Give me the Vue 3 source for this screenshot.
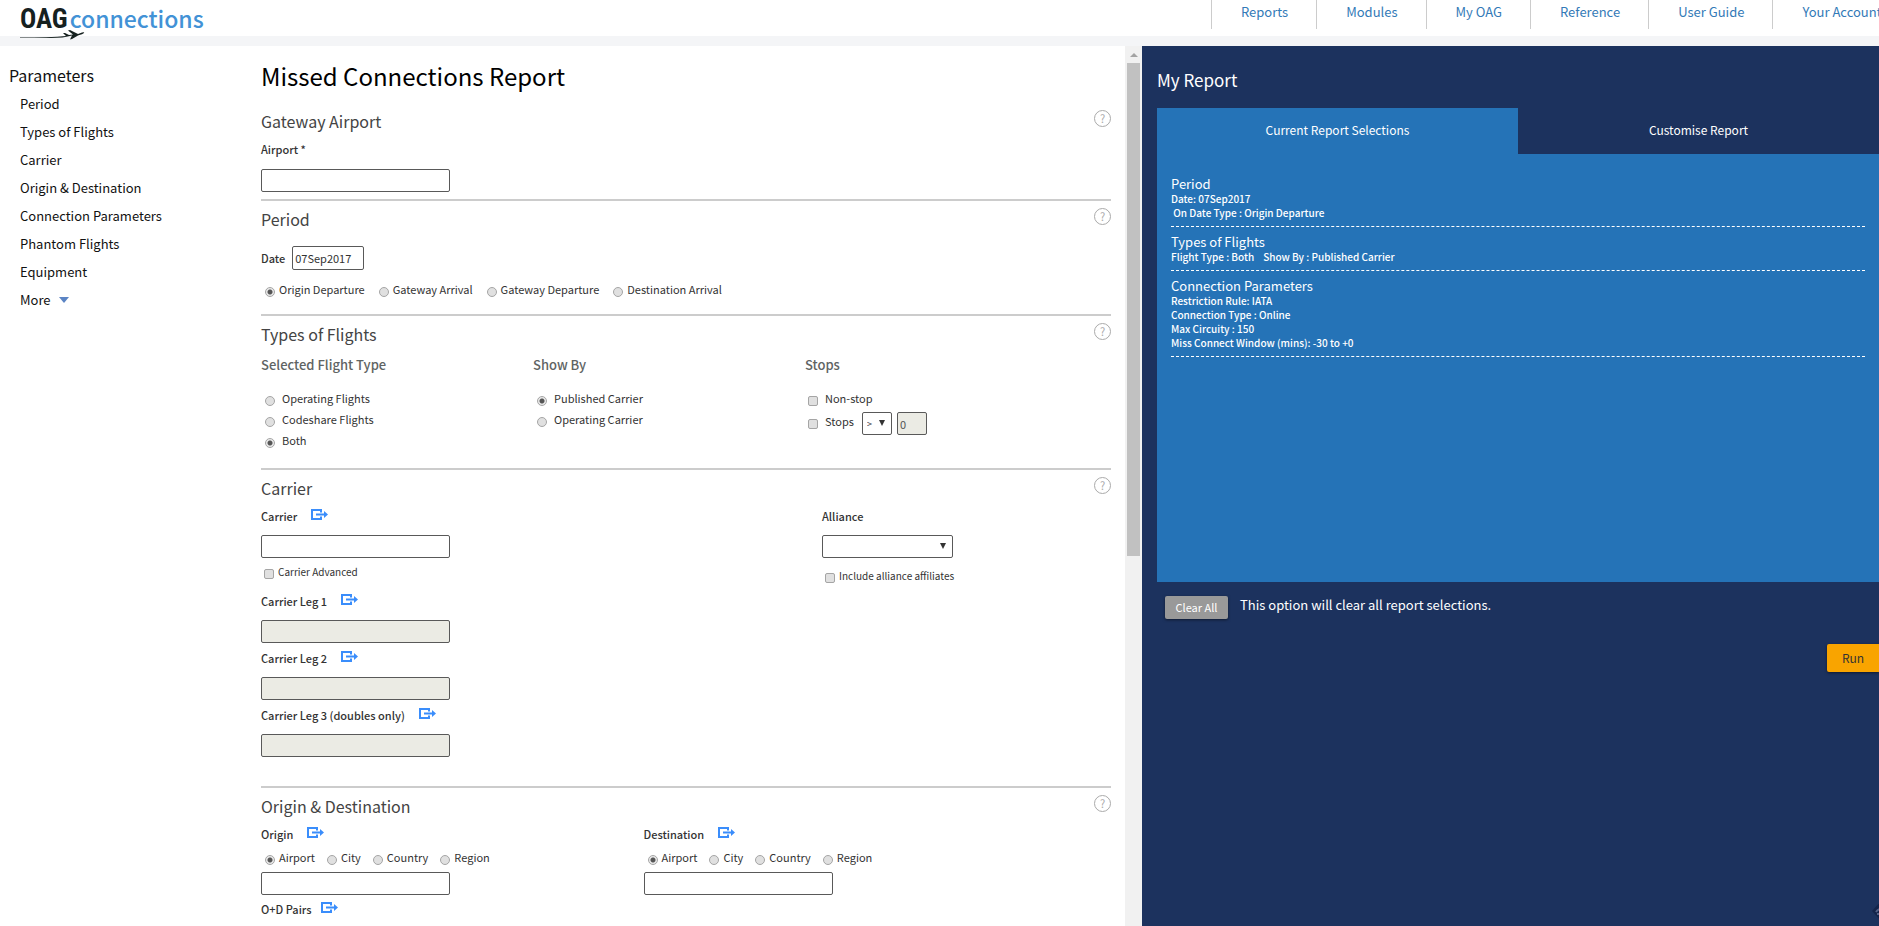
<script setup>
import { ref } from 'vue'

const nav = ['Reports', 'Modules', 'My OAG', 'Reference', 'User Guide', 'Your Account']
const params = [
  'Period',
  'Types of Flights',
  'Carrier',
  'Origin & Destination',
  'Connection Parameters',
  'Phantom Flights',
  'Equipment',
]
const dateTypes = ['Origin Departure', 'Gateway Arrival', 'Gateway Departure', 'Destination Arrival']
const flightTypes = ['Operating Flights', 'Codeshare Flights', 'Both']
const showByTypes = ['Published Carrier', 'Operating Carrier']
const legs = ['Carrier Leg 1', 'Carrier Leg 2', 'Carrier Leg 3 (doubles only)']
const places = ['Airport', 'City', 'Country', 'Region']
const ends = ['Origin', 'Destination']

const date = ref('07Sep2017')
const dateType = ref('Origin Departure')
const flightType = ref('Both')
const showBy = ref('Published Carrier')
const place = ref({ Origin: 'Airport', Destination: 'Airport' })

const summary = [
  { title: 'Period', lines: ['Date: 07Sep2017', '\u00a0On Date Type : Origin Departure'] },
  { title: 'Types of Flights', lines: ['Flight Type : Both\u00a0\u00a0\u00a0 Show By : Published Carrier'] },
  {
    title: 'Connection Parameters',
    lines: [
      'Restriction Rule: IATA',
      'Connection Type : Online',
      'Max Circuity : 150',
      'Miss Connect Window (mins): -30 to +0',
    ],
  },
]
</script>

<template>
  <div class="page">
    <svg width="0" height="0" class="defs" aria-hidden="true">
      <symbol id="lookup" viewBox="0 0 17 11">
        <path d="M1 1h9v9H1z" fill="none" stroke="#3a8dfb" stroke-width="2" />
        <path d="M8 3.500h4v4H8z" fill="#fff" />
        <path d="M5 4.500h8V2l4 3.500-4 3.500V6.500H5z" fill="#3a8dfb" />
      </symbol>
    </svg>

    <header class="top">
      <a href="#" class="logo" aria-label="OAG connections">
        <span class="oag">OAG</span>
        <span class="conn">connections</span>
        <svg class="plane" width="66" height="12" viewBox="0 0 66 12" aria-hidden="true">
          <path d="M0 8.500Q30 8.500 46 7L43 4h2l4 2 4-.5L48 1.500l2-.5 8 4 4-1.500q3-.5 2 .5-1 1-6 2.500L52 10l-2 .5 2-4Q44 9 30 9T0 9z" fill="#16211f" />
        </svg>
      </a>
      <nav class="nav">
        <a v-for="n in nav" :key="n" href="#">{{ n }}</a>
      </nav>
    </header>

    <main class="main">
      <div class="left">
        <aside class="side">
          <h2>Parameters</h2>
          <a v-for="p in params" :key="p" href="#">{{ p }}</a>
          <a href="#" class="more">More <i class="caret"></i></a>
        </aside>

        <form class="form" @submit.prevent>
          <h1>Missed Connections Report</h1>

          <section class="sec gateway">
            <div class="head"><h3>Gateway Airport</h3><button type="button" class="help">?</button></div>
            <div class="lab"><label for="airport">Airport *</label></div>
            <input id="airport" type="text" class="box" />
          </section>

          <section class="sec period">
            <div class="head"><h3>Period</h3><button type="button" class="help">?</button></div>
            <div class="date">
              <label for="date">Date</label>
              <input id="date" v-model="date" type="text" class="box" />
            </div>
            <div class="inline">
              <label v-for="d in dateTypes" :key="d" class="opt">
                <input v-model="dateType" type="radio" name="dateType" :value="d" /><span>{{ d }}</span>
              </label>
            </div>
          </section>

          <section class="sec types">
            <div class="head"><h3>Types of Flights</h3><button type="button" class="help">?</button></div>
            <div class="thirds">
              <div>
                <h4>Selected Flight Type</h4>
                <label v-for="f in flightTypes" :key="f" class="opt wide">
                  <input v-model="flightType" type="radio" name="flightType" :value="f" /><span>{{ f }}</span>
                </label>
              </div>
              <div>
                <h4>Show By</h4>
                <label v-for="s in showByTypes" :key="s" class="opt wide">
                  <input v-model="showBy" type="radio" name="showBy" :value="s" /><span>{{ s }}</span>
                </label>
              </div>
              <div>
                <h4>Stops</h4>
                <label class="opt wide"><input type="checkbox" /><span>Non-stop</span></label>
                <div class="stops">
                  <label class="opt wide"><input type="checkbox" /><span>Stops</span></label>
                  <span class="pick op">
                    <select aria-label="Stops comparison"><option>&gt;</option></select>
                  </span>
                  <input type="text" class="box" value="0" disabled aria-label="Number of stops" />
                </div>
              </div>
            </div>
          </section>

          <section class="sec carrier">
            <div class="head"><h3>Carrier</h3><button type="button" class="help">?</button></div>
            <div class="split">
              <div>
                <div class="lab">
                  <label for="carrier">Carrier</label>
                  <button type="button" class="look" aria-label="Look up"><svg width="17" height="11"><use href="#lookup" /></svg></button>
                </div>
                <input id="carrier" type="text" class="box" />
                <label class="opt small adv"><input type="checkbox" /><span>Carrier Advanced</span></label>
                <div v-for="(l, i) in legs" :key="l" class="leg">
                  <div class="lab">
                    <label :for="'leg' + i">{{ l }}</label>
                    <button type="button" class="look" aria-label="Look up"><svg width="17" height="11"><use href="#lookup" /></svg></button>
                  </div>
                  <input :id="'leg' + i" type="text" class="box" disabled />
                </div>
              </div>
              <div>
                <div class="lab"><label for="alliance">Alliance</label></div>
                <span class="pick alliance"><select id="alliance"><option></option></select></span>
                <label class="opt small incl"><input type="checkbox" /><span>Include alliance affiliates</span></label>
              </div>
            </div>
          </section>

          <section class="sec od">
            <div class="head"><h3>Origin &amp; Destination</h3><button type="button" class="help">?</button></div>
            <div class="halves">
              <div v-for="e in ends" :key="e">
                <div class="lab">
                  <label :for="e">{{ e }}</label>
                  <button type="button" class="look" aria-label="Look up"><svg width="17" height="11"><use href="#lookup" /></svg></button>
                </div>
                <div class="inline">
                  <label v-for="p in places" :key="p" class="opt">
                    <input v-model="place[e]" type="radio" :name="e + 'Place'" :value="p" /><span>{{ p }}</span>
                  </label>
                </div>
                <input :id="e" type="text" class="box" />
              </div>
            </div>
            <div class="lab pairs">
              <span>O+D Pairs</span>
              <button type="button" class="look" aria-label="Look up"><svg width="17" height="11"><use href="#lookup" /></svg></button>
            </div>
          </section>
        </form>

        <div class="bar" aria-hidden="true"><i class="up"></i><i class="thumb"></i></div>
      </div>

      <aside class="report">
        <h2>My Report</h2>
        <div class="tabs">
          <button type="button" class="on">Current Report Selections</button>
          <button type="button">Customise Report</button>
        </div>
        <div class="body">
          <div v-for="s in summary" :key="s.title" class="block">
            <h3>{{ s.title }}</h3>
            <p v-for="l in s.lines" :key="l">{{ l }}</p>
          </div>
        </div>
        <div class="clear">
          <button type="button">Clear All</button>
          <p>This option will clear all report selections.</p>
        </div>
        <div class="run"><button type="button">Run</button></div>
        <svg class="corner" width="7" height="20" viewBox="0 0 7 20" aria-hidden="true">
          <path d="M9 0 0 10l9 10z" fill="#14244a" />
          <path d="M4 11q2-3 5-3M5 13h4" fill="none" stroke="#55648a" stroke-width="2" />
        </svg>
      </aside>
    </main>
  </div>
</template>

<style>
body {
  margin: 0;
  overflow: hidden;
}
</style>

<style scoped>
.page {
  height: 100vh;
  display: flex;
  flex-direction: column;
  overflow: hidden;
  background: #fff;
  color: #333;
  font-family: 'Source Sans Pro', 'Noto Sans CJK SC', 'Noto Sans', sans-serif;
  font-size: 11px;
}
.page * {
  box-sizing: border-box;
}
.defs {
  position: absolute;
}
h1, h2, h3, h4, p {
  margin: 0;
  font-weight: 400;
}
a {
  text-decoration: none;
}
button, input, select {
  font-family: inherit;
  color: inherit;
}
button {
  border: 0;
  padding: 0;
  background: none;
}

/* top bar */
.top {
  flex: none;
  display: grid;
  grid-template-columns: 1211fr 668fr;
  height: 46px;
  border-bottom: 10px solid #f4f5f7;
}
.logo {
  position: relative;
  display: flex;
  align-items: center;
  gap: 2px;
  height: 38px;
  padding-left: 20px;
}
.oag {
  color: #16211f;
  font-family: 'Roboto Condensed', 'Liberation Sans Narrow', Roboto, sans-serif;
  font-size: 27px;
  font-weight: 700;
}
.conn {
  padding-bottom: 2px;
  color: #4292d6;
  font-size: 23px;
  font-weight: 500;
}
.plane {
  position: absolute;
  left: 20px;
  top: 29px;
}
.nav {
  display: flex;
  overflow: hidden;
}
.nav a {
  flex: none;
  height: 29px;
  padding: 0 28px 0 29px;
  border-left: 1px solid #ccc;
  color: #337ab7;
  font-size: 13px;
  line-height: 23px;
}

.main {
  flex: 1;
  min-height: 0;
  display: grid;
  grid-template-columns: 1142fr 737fr;
}
.left {
  display: flex;
  min-width: 0;
  overflow: hidden;
}

/* sidebar */
.side {
  flex: none;
  display: flex;
  flex-direction: column;
  width: 261px;
  padding: 14px 0 0 9px;
  color: #111;
}
.side h2 {
  font-size: 16px;
  line-height: 30px;
}
.side a {
  padding-left: 11px;
  color: #111;
  font-size: 13px;
  line-height: 28px;
}
.more {
  display: flex;
  align-items: center;
  gap: 8px;
}
.caret {
  border: 5px solid transparent;
  border-top: 6px solid #5b84c4;
  border-bottom: 0;
}

/* form */
.form {
  flex: 1;
  min-width: 0;
  padding-right: 14px;
}
.form h1 {
  padding: 12px 0 9px;
  color: #000;
  font-size: 24px;
  line-height: 36px;
}
.sec {
  border-bottom: 2px solid #ccc;
}
.head {
  display: flex;
  justify-content: space-between;
  height: 34px;
  padding-top: 3px;
}
.head h3 {
  color: #444;
  font-size: 16px;
  line-height: 30px;
}
.help {
  width: 17px;
  height: 17px;
  margin-top: 4px;
  border: 1px solid #aaa;
  border-radius: 50%;
  color: #aaa;
  font-size: 11px;
  line-height: 15px;
}
.lab {
  display: flex;
  align-items: center;
  gap: 14px;
  height: 26px;
  margin-bottom: 5px;
  padding-bottom: 2px;
  font-size: 11px;
  font-weight: 500;
}
.look {
  display: flex;
  padding-bottom: 4px;
}
.box {
  display: block;
  width: 189px;
  height: 23px;
  padding: 0 2px;
  border: 1px solid #595959;
  border-radius: 2px;
  background: #fff;
  font-size: 11px;
}
.box:disabled {
  background: #ebebe4;
  color: #545454;
}
.gateway {
  padding-bottom: 7px;
}
.gateway .lab {
  margin-bottom: 6px;
}
.period {
  padding-bottom: 14px;
}
.date {
  display: flex;
  align-items: center;
  gap: 7px;
  margin: 11px 0 10px;
  font-weight: 500;
}
.date .box {
  width: 72px;
  height: 24px;
}
.inline {
  display: flex;
  gap: 12px;
  height: 20px;
}
.period .inline {
  gap: 14px;
}
.opt {
  display: flex;
  align-items: center;
  gap: 4px;
  height: 20px;
  padding-left: 4px;
  white-space: nowrap;
}
.opt span {
  padding-bottom: 2px;
}
.inline .opt + .opt {
  padding-left: 0;
}
.opt.wide {
  gap: 7px;
  height: 21px;
}
.opt input {
  appearance: none;
  width: 10px;
  height: 10px;
  margin: 4px 0 0;
  border: 1px solid #a5a5a5;
  border-radius: 2px;
  background: #e0e0e0;
}
.opt input[type='radio'] {
  border-radius: 50%;
}
.opt input[type='radio']:checked {
  background: radial-gradient(circle, #555 2px, #e8e8e8 3px);
}
.opt input[type='checkbox']:checked {
  background: #555;
}
.opt.small {
  font-size: 10px;
  padding-left: 3px;
}

.thirds {
  display: grid;
  grid-template-columns: 32% 32% 36%;
  padding-bottom: 17px;
}
.thirds h4 {
  margin-bottom: 8px;
  color: #5f6464;
  font-size: 13px;
  font-weight: 500;
  line-height: 30px;
}
.thirds input[type='checkbox'] {
  margin-left: -1px;
}
.stops {
  display: flex;
  padding-top: 3px;
}
.stops .opt {
  height: 19px;
}
.stops .op {
  margin: 0 5px 0 8px;
}
.stops .box {
  width: 30px;
}
.pick {
  position: relative;
  display: block;
  width: 131px;
}
.pick.op {
  width: 30px;
}
.pick select {
  appearance: none;
  display: block;
  width: 100%;
  height: 23px;
  padding: 0 4px;
  border: 1px solid #595959;
  border-radius: 2px;
  background: #fff;
  font-size: 9px;
}
.pick::after {
  content: '';
  position: absolute;
  right: 7px;
  top: 8px;
  border: 3px solid transparent;
  border-top: 6px solid #333;
  border-bottom: 0;
}

.split {
  display: grid;
  grid-template-columns: 66% 34%;
  padding-bottom: 26px;
}
.opt.adv {
  height: 31px;
  padding-bottom: 3px;
}
.opt.incl {
  height: 36px;
}
.leg .box {
  margin-bottom: 3px;
}
.halves {
  display: grid;
  grid-template-columns: 45% 55%;
}
.halves .lab {
  margin: 0;
}
.halves .inline {
  margin-bottom: 4px;
}
.pairs {
  gap: 9px;
  margin-top: 2px;
}

/* scroll bar of the form pane */
.bar {
  flex: none;
  width: 17px;
  background: #f1f1f1;
}
.bar i {
  display: block;
}
.up {
  width: 8px;
  margin: 7px auto 6px;
  border: 4px solid transparent;
  border-top: 0;
  border-bottom-color: #a3a3a3;
}
.thumb {
  width: 13px;
  height: 56%;
  margin: 0 auto;
  background: #c1c1c1;
}

/* report panel */
.report {
  position: relative;
  min-width: 0;
  padding: 15px 0 0 15px;
  background: #1c325e;
  color: #fff;
}
.report h2 {
  padding-bottom: 10px;
  font-size: 17px;
  line-height: 37px;
}
.tabs {
  display: flex;
}
.tabs button {
  flex: 1;
  height: 46px;
  padding-bottom: 3px;
  font-size: 12px;
}
.tabs .on {
  background: #2573b7;
}
.body {
  min-height: 428px;
  padding: 15px 14px;
  background: #2573b7;
}
.block {
  padding: 6px 0;
  border-bottom: 1px dashed #fff;
}
.block h3 {
  font-size: 13px;
  line-height: 17px;
}
.block p {
  font-size: 10px;
  font-weight: 500;
  line-height: 14px;
}
.clear {
  display: flex;
  gap: 12px;
  padding: 14px 8px 0;
}
.clear button {
  width: 63px;
  height: 23px;
  padding-bottom: 2px;
  border-radius: 2px;
  background: #999;
  box-shadow: 0 1px 3px rgba(0, 0, 0, 0.5);
  font-size: 11px;
}
.clear p {
  font-size: 13px;
  line-height: 18px;
}
.run {
  display: flex;
  justify-content: flex-end;
  padding-top: 25px;
}
.run button {
  width: 52px;
  height: 28px;
  padding-bottom: 2px;
  border-radius: 2px 0 0 2px;
  background: #f9a400;
  box-shadow: 0 1px 3px rgba(0, 0, 0, 0.5);
  color: #333;
  font-size: 12px;
}
.corner {
  position: absolute;
  right: 0;
  bottom: 5px;
}
</style>
